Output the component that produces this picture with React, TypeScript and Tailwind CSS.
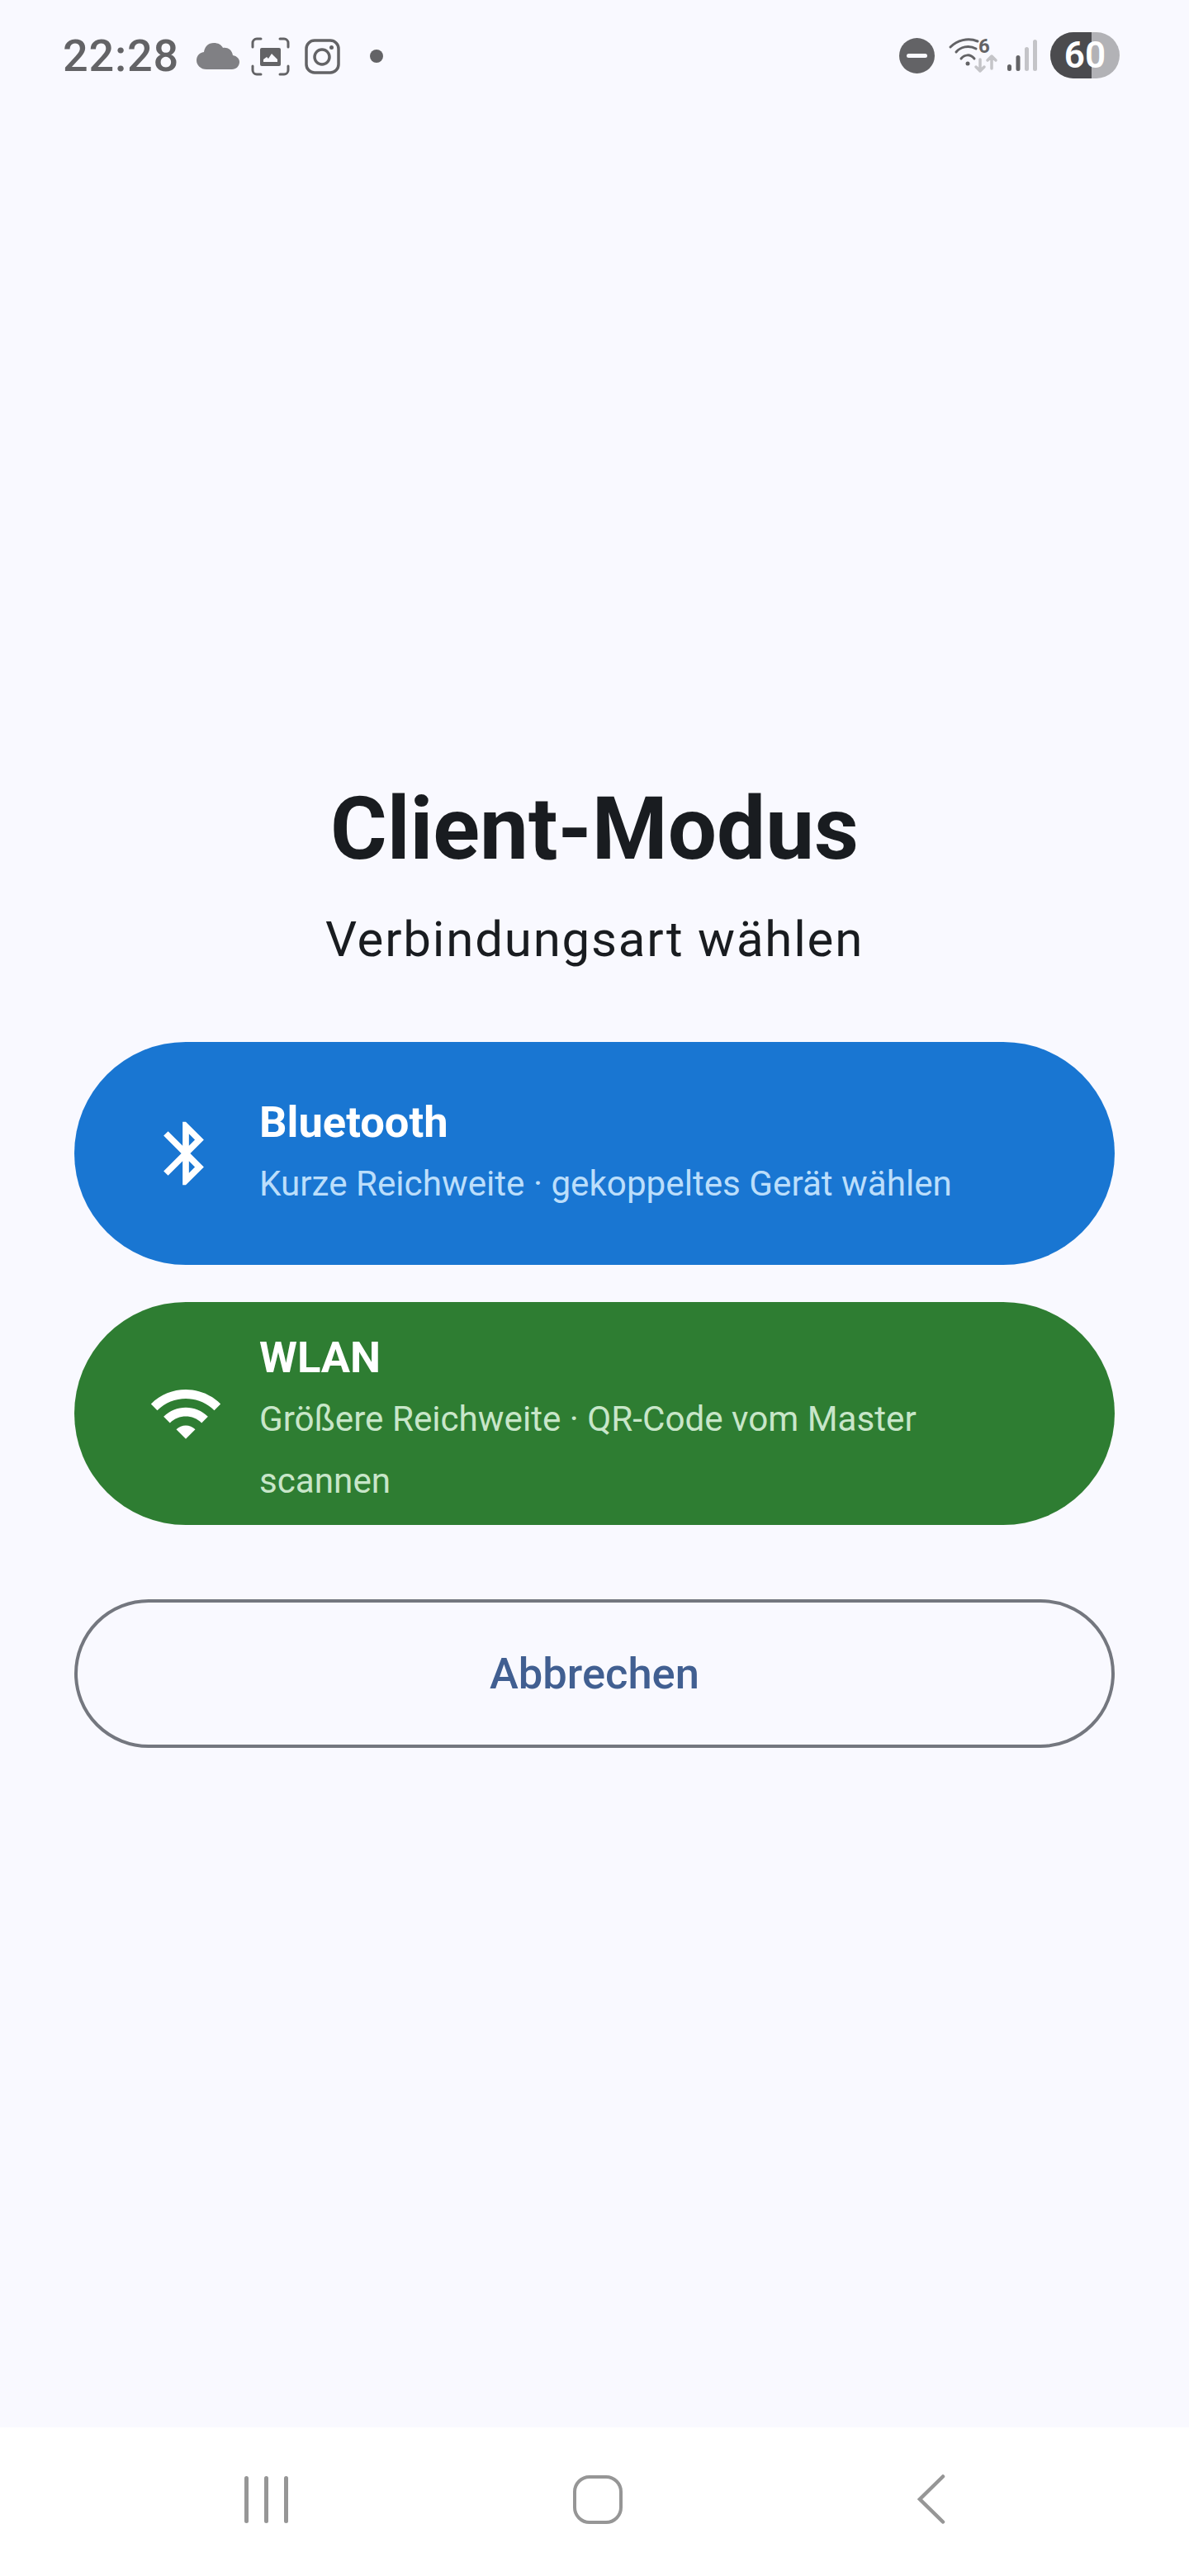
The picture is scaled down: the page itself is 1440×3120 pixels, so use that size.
import React from "react";

const font = { fontFamily: "Roboto, sans-serif" };

const StatusBar = () => (
  <div className="flex h-[130px] items-start justify-between pl-[76px] pr-[84px]">
    <div className="flex items-center pt-[38px]">
      <span className="text-[54px] leading-[60px] font-medium tracking-[0.8px] text-[#636366]">22:28</span>
      <svg viewBox="0 0 52 32" className="ml-[21px] h-[32px] w-[52px]" fill="#808084">
        <path d="M12 32C5 32 0 27 0 21c0-5 3-9 9-10C10 4 15 0 21 0c5 0 9 2 11 6 5-1 11 2 12 9 5 1 8 4 8 8 0 5-4 9-9 9z" />
      </svg>
      <svg viewBox="0 0 47 47" className="ml-[14px] h-[47px] w-[47px]" fill="none" stroke="#636366" strokeWidth="3" strokeLinecap="round">
        <path d="M12 2H7a5 5 0 0 0-5 5v5M35 2h5a5 5 0 0 1 5 5v5M12 45H7a5 5 0 0 1-5-5v-5M35 45h5a5 5 0 0 0 5-5v-5" />
        <rect x="11" y="13" width="25" height="22" rx="2" fill="#636366" stroke="none" />
        <path d="M15 30v-3l4-3 2 2 4-6 3 3 4 4v3z" fill="#f9f9ff" stroke="none" />
      </svg>
      <svg viewBox="0 0 43 43" className="ml-[18px] h-[43px] w-[43px]" fill="none" stroke="#636366" strokeWidth="3.5">
        <rect x="2" y="2" width="39" height="39" rx="10" />
        <circle cx="21" cy="22" r="9" />
        <circle cx="32.5" cy="10.5" r="2.5" fill="#636366" stroke="none" />
      </svg>
      <div className="ml-[36px] h-[16px] w-[16px] rounded-full bg-[#636366]" />
    </div>
    <div className="flex items-center pt-[39px]">
      <div className="flex h-[43px] w-[43px] items-center justify-center rounded-full bg-[#636366]">
        <div className="h-[5px] w-[25px] rounded-full bg-[#f9f9ff]" />
      </div>
      <svg viewBox="0 0 58 42" className="ml-[18px] h-[42px] w-[58px] overflow-visible" fill="none" strokeLinecap="round">
        <g stroke="#636366" strokeWidth="3">
          <path d="M1 11C9 3 22-1 34 4M8 17c5-6 15-9 24-4M14 25c4-5 11-6 16 0" />
        </g>
        <circle cx="22" cy="31" r="2.500" fill="#636366" />
        <text x="35" y="18" fontSize="24" fontWeight="700" fill="#636366">6</text>
        <g stroke="#c4c4c8" strokeWidth="3.5" strokeLinejoin="round">
          <path d="M37 26v14M32 35l5 5 5-5M51 37V22M46 27l5-5 5 5" />
        </g>
      </svg>
      <svg viewBox="0 0 36 38" className="ml-[12px] h-[38px] w-[36px]" strokeLinecap="round" strokeWidth="5">
        <path d="M2.500 32.500v3M13 21.500v14" stroke="#636366" />
        <path d="M23.500 11.500v24M33.500 2.500v33" stroke="#c4c4c8" />
      </svg>
      <div className="relative ml-[16px] flex h-[56px] w-[84px] items-center justify-center overflow-hidden rounded-full bg-[#b2b2b6]">
        <div className="absolute inset-y-0 left-0 w-[50px] bg-[#4b4b4e]" />
        <span className="relative text-[44px] leading-none font-semibold text-white">60</span>
      </div>
    </div>
  </div>
);

type OptionProps = {
  bg: string;
  title: string;
  sub: string;
  subColor: string;
  textClass?: string;
  icon: React.ReactNode;
};

const Option = ({ bg, title, sub, subColor, textClass, icon }: OptionProps) => (
  <div className={`flex h-[270px] items-center rounded-full pl-[89px] pr-[90px] ${bg}`}>
    <div className="h-[92px] w-[92px] shrink-0">{icon}</div>
    <div className={`ml-[43px] min-w-0 ${textClass ?? ""}`}>
      <div className="text-[52.5px] leading-[73px] font-bold text-white">{title}</div>
      <div className={`text-[42.2px] leading-[75px] ${subColor}`}>{sub}</div>
    </div>
  </div>
);

const App = () => {
  return (
    <div className="flex h-[3120px] w-[1440px] flex-col bg-[#f9f9ff]" style={font}>
      <StatusBar />
      <div className="flex flex-1 flex-col px-[90px] pt-[815px]">
        <h1 className="text-center text-[105px] leading-[120px] font-bold text-[#191c20]">Client-Modus</h1>
        <p className="mt-[35px] text-center text-[60px] leading-[76px] tracking-[1.8px] text-[#191c20]">Verbindungsart wählen</p>
        <div className="mt-[86px] flex flex-col gap-[45px]">
          <Option
            bg="bg-[#1976d2]"
            title="Bluetooth"
            sub="Kurze Reichweite · gekoppeltes Gerät wählen"
            subColor="text-[#bbdefb]"
            icon={
              <svg viewBox="0 0 24 24" className="h-[92px] w-[92px]" fill="#fff">
                <path d="M17.71 7.71L12 2h-1v7.59L6.41 5 5 6.41 10.59 12 5 17.59 6.41 19 11 14.41V22h1l5.710-5.710-4.300-4.290 4.300-4.290zM13 5.830l1.880 1.880L13 9.590V5.830zm1.880 10.460L13 18.170v-3.760l1.880 1.880z" />
              </svg>
            }
          />
          <Option
            bg="bg-[#2e7d32]"
            title="WLAN"
            sub="Größere Reichweite · QR-Code vom Master scannen"
            subColor="text-[#c8e6c9]"
            textClass="mt-[15px]"
            icon={
              <svg viewBox="0 0 24 24" className="h-[92px] w-[92px]" fill="#fff">
                <path d="M1 9l2 2c4.970-4.970 13.030-4.970 18 0l2-2C16.930 2.930 7.080 2.930 1 9zm8 8l3 3 3-3c-1.650-1.660-4.340-1.660-6 0zm-4-4l2 2c2.760-2.760 7.240-2.760 10 0l2-2C15.140 9.140 8.870 9.140 5 13z" />
              </svg>
            }
          />
        </div>
        <button className="mt-[90px] flex h-[180px] w-full items-center justify-center rounded-full border-[4px] border-[#74777f] text-[52.5px] font-medium text-[#415f91]">
          Abbrechen
        </button>
      </div>
      <div className="flex h-[180px] items-center bg-white pb-[6px] pl-[296px]">
        <div className="flex gap-[19px]">
          <div className="h-[57px] w-[5px] rounded-full bg-[#969696]" />
          <div className="h-[57px] w-[5px] rounded-full bg-[#969696]" />
          <div className="h-[57px] w-[5px] rounded-full bg-[#969696]" />
        </div>
        <div className="ml-[345px] h-[59px] w-[60px] rounded-[20px] border-[4px] border-[#969696]" />
        <svg viewBox="0 0 34 60" className="ml-[357px] h-[60px] w-[34px]" fill="none" stroke="#969696" strokeWidth="4.500" strokeLinecap="round">
          <path d="M31 2.500L3 30l28 27.500" />
        </svg>
      </div>
    </div>
  );
};

export default App;
